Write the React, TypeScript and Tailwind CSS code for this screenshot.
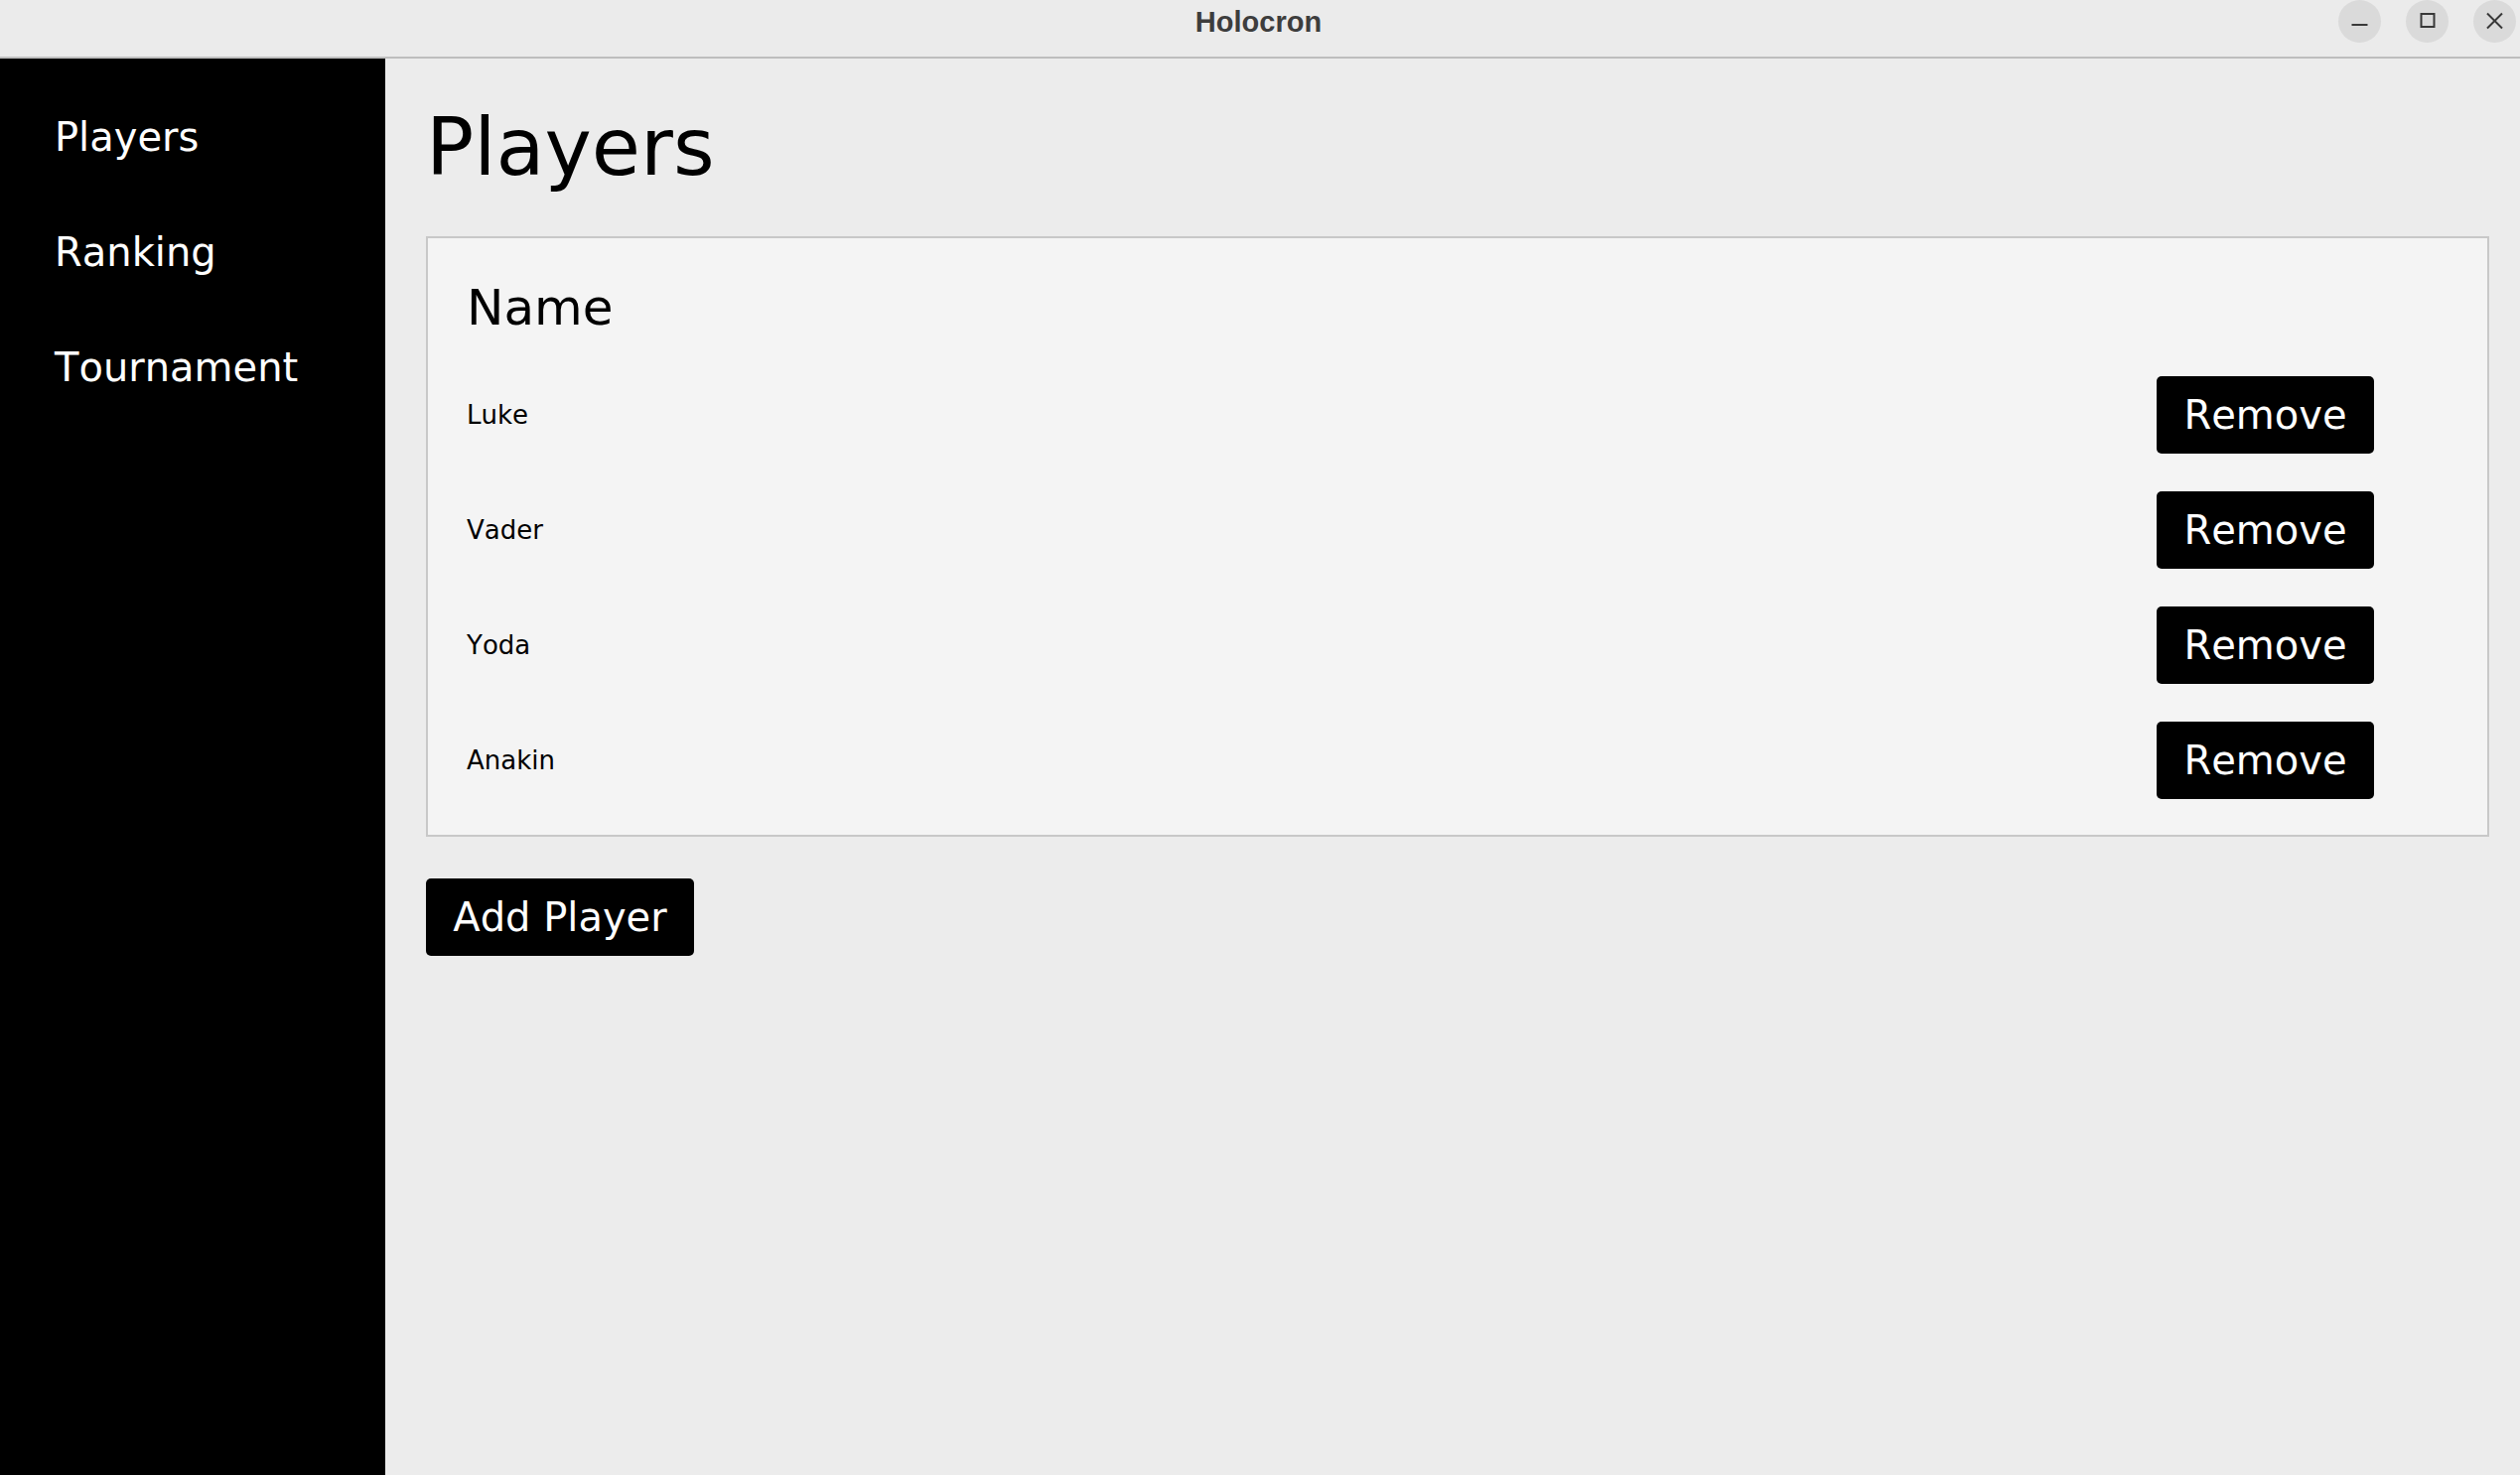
import React from "react";

const dv = { fontFamily: '"DejaVu Sans", Verdana, sans-serif' };

function WinBtn({ kind }: { kind: "min" | "max" | "close" }) {
  return (
    <div className="w-[43px] h-[43px] rounded-full bg-[#dadada] flex items-center justify-center">
      <svg width="43" height="43" viewBox="0 0 43 43" fill="none" stroke="#383838" strokeWidth="2">
        {kind === "min" && <line x1="13.5" y1="25" x2="29.5" y2="25" />}
        {kind === "max" && <rect x="15.5" y="14" width="13" height="13" />}
        {kind === "close" && (
          <>
            <line x1="14" y1="13.5" x2="29" y2="28.5" />
            <line x1="29" y1="13.5" x2="14" y2="28.5" />
          </>
        )}
      </svg>
    </div>
  );
}

const players = ["Luke", "Vader", "Yoda", "Anakin"];

export default function App() {
  return (
    <div className="w-[2538px] h-[1486px] flex flex-col bg-[#ececec] overflow-hidden [font-kerning:none]" style={dv}>
      <div className="relative h-[59px] shrink-0 bg-[#ebebeb] border-b-2 border-[#bebebe] flex justify-center">
        <div
          className="pt-[8px] pr-[3px] text-[29px] leading-none font-bold text-[#3d3d3d]"
          style={{ fontFamily: '"Liberation Sans", Arial, sans-serif' }}
        >
          Holocron
        </div>
        <div className="absolute right-[4px] top-0 flex gap-[25px]">
          <WinBtn kind="min" />
          <WinBtn kind="max" />
          <WinBtn kind="close" />
        </div>
      </div>
      <div className="flex flex-1 min-h-0">
        <nav className="w-[388px] shrink-0 bg-black flex flex-col gap-[76px] pt-[59px] pl-[55px]">
          <div className="text-white text-[40px] leading-none">Players</div>
          <div className="text-white text-[40px] leading-none">Ranking</div>
          <div className="text-white text-[40px] leading-none">Tournament</div>
        </nav>
        <main className="flex-1 pl-[41px] pr-[31px] pt-[50px]">
          <h1 className="text-[80px] leading-none text-black mb-[49px]">Players</h1>
          <div className="bg-[#f4f4f4] border-2 border-[#c8c8c8] pl-[39px] pr-[114px] pt-[45px] pb-[36px]">
            <div className="text-[50px] leading-none text-black mb-[44px]">Name</div>
            <div className="flex flex-col gap-[38px]">
              {players.map((p) => (
                <div key={p} className="h-[78px] flex items-center justify-between">
                  <span className="text-[26px] leading-none text-black">{p}</span>
                  <button className="w-[219px] h-[78px] rounded-[5px] bg-black text-white text-[40px] leading-none flex items-center justify-center">
                    Remove
                  </button>
                </div>
              ))}
            </div>
          </div>
          <button className="mt-[42px] w-[270px] h-[78px] rounded-[5px] bg-black text-white text-[40px] leading-none flex items-center justify-center">
            Add Player
          </button>
        </main>
      </div>
    </div>
  );
}
